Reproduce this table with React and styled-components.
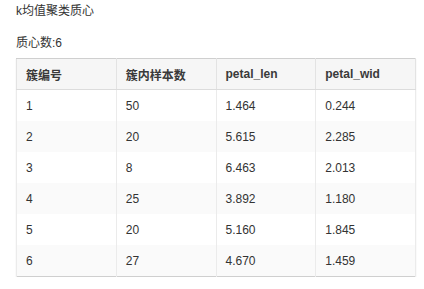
import styled, { createGlobalStyle } from "styled-components";

const GlobalStyle = createGlobalStyle`
  body {
    margin: 0;
    background: #ffffff;
    font-family: "Liberation Sans", "Noto Sans CJK SC", Arial, sans-serif;
    color: #333333;
  }
`

const Page = styled.div`
  padding: 3px 8px 0 16px;
`

const Caption = styled.div`
  font-size: 12px;
  line-height: 16px;
  margin-bottom: ${props => props.gap || "0"};
`

const Table = styled.table`
  width: 400px;
  border-collapse: collapse;
  table-layout: fixed;
  font-size: 12px;
  border: 1px solid #cfcfcf;
  box-shadow: 0 1px 1px rgba(0, 0, 0, 0.12);
`

const HeadCell = styled.th`
  height: 30px;
  padding: 0 9px;
  text-align: left;
  font-weight: 700;
  color: #3a3a3a;
  background: #f6f6f6;
  border: 1px solid #e3e3e3;
  border-color: #cfcfcf #e3e3e3 #dcdcdc;
`

const Row = styled.tr`
  background: ${props => (props.striped ? "#fafafa" : "#ffffff")};
`

const Cell = styled.td`
  height: 31px;
  padding: 0 9px;
  color: #333333;
  border-left: 1px solid #ebebeb;
  border-right: 1px solid #ebebeb;
`

const columns = ["簇编号", "簇内样本数", "petal_len", "petal_wid"]

const rows = [
  ["1", "50", "1.464", "0.244"],
  ["2", "20", "5.615", "2.285"],
  ["3", "8", "6.463", "2.013"],
  ["4", "25", "3.892", "1.180"],
  ["5", "20", "5.160", "1.845"],
  ["6", "27", "4.670", "1.459"],
]

export default function App() {
  return (
    <>
      <GlobalStyle />
      <Page>
        <Caption gap="16px">k均值聚类质心</Caption>
        <Caption gap="7px">质心数:6</Caption>
        <Table>
          <thead>
            <tr>
              {columns.map(c => (
                <HeadCell key={c}>{c}</HeadCell>
              ))}
            </tr>
          </thead>
          <tbody>
            {rows.map((r, i) => (
              <Row key={r[0]} striped={i % 2 === 1}>
                {r.map((v, j) => (
                  <Cell key={j}>{v}</Cell>
                ))}
              </Row>
            ))}
          </tbody>
        </Table>
      </Page>
    </>
  )
}
